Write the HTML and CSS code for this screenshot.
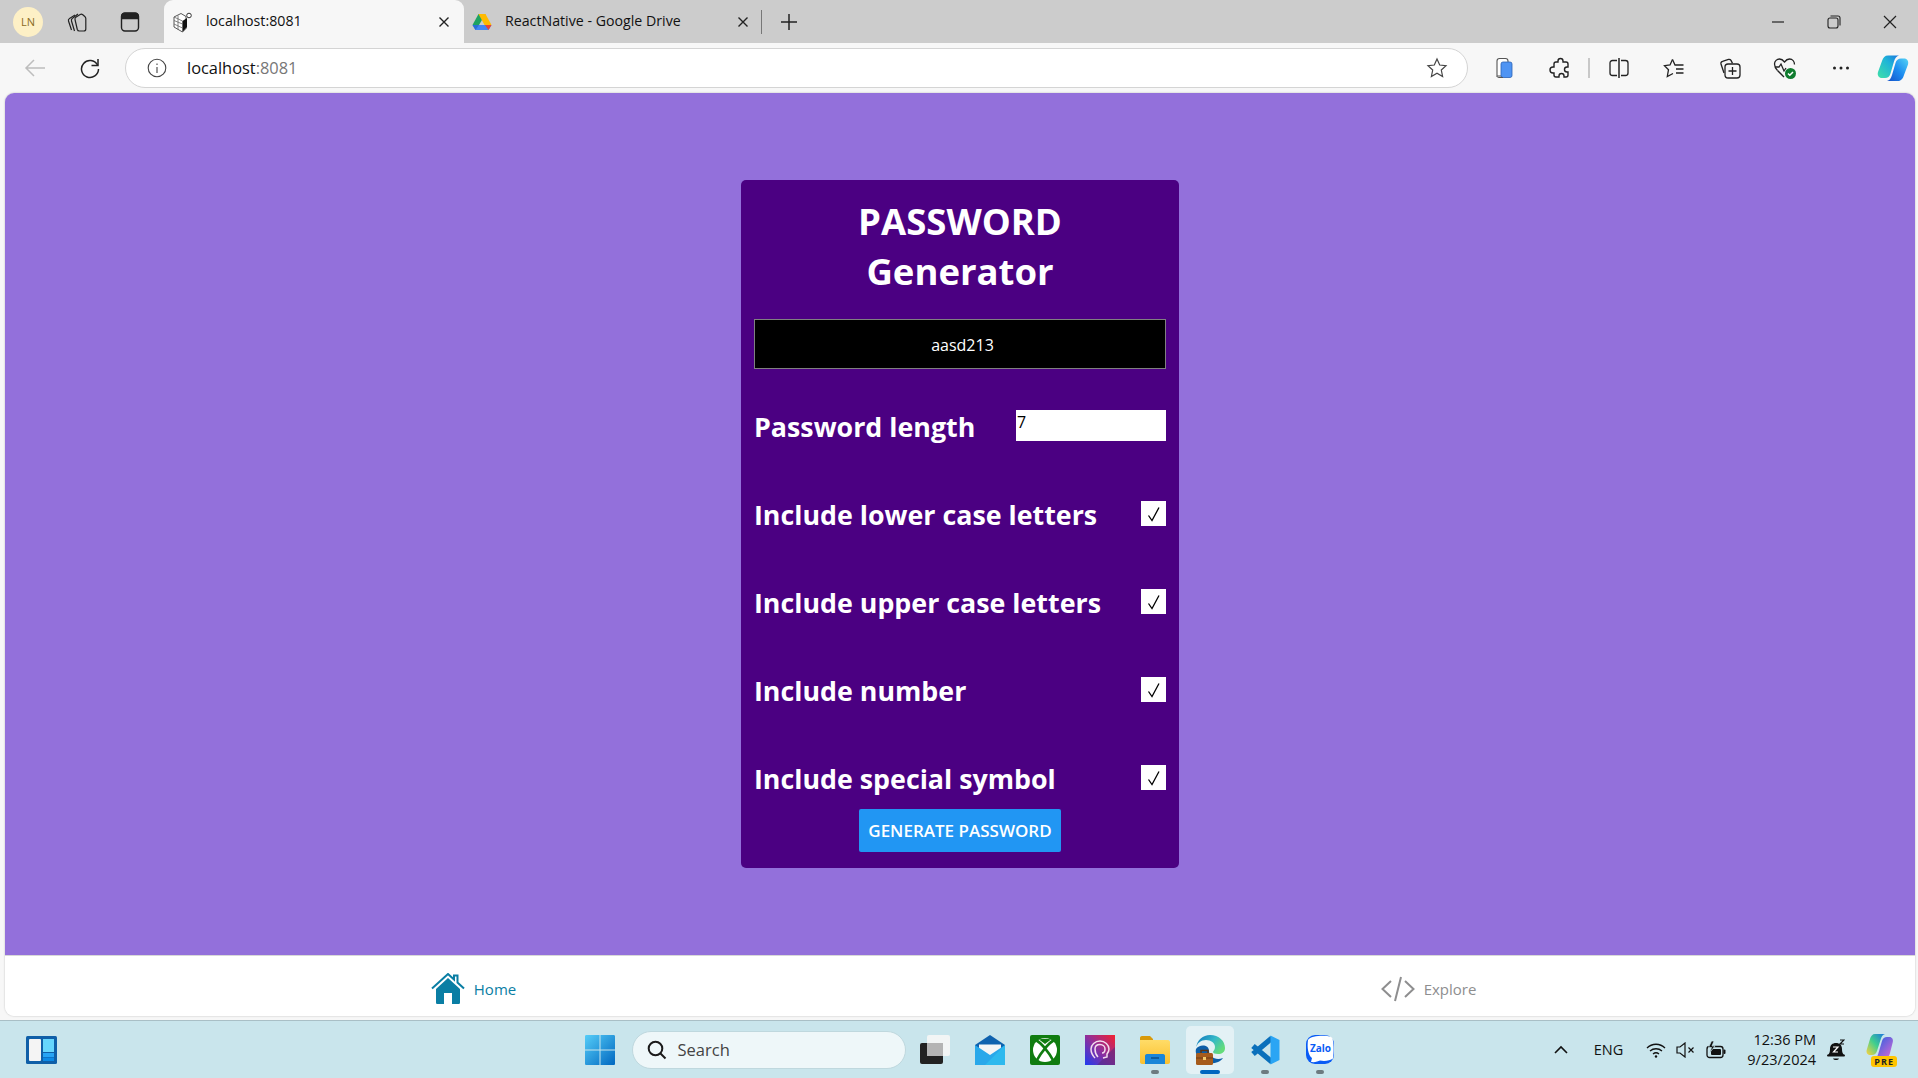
FILE: index.html
```html
<!DOCTYPE html>
<html lang="en">
<head>
    <meta charset="UTF-8">
    <title>localhost:8081</title>
    <link rel="stylesheet" href="styles.css">
</head>
<body>
    <!-- Browser tab strip -->
    <div class="tabstrip">
        <div class="avatar">LN</div>
        <div class="strip-btn">
            <svg width="22" height="22" viewBox="0 0 22 22" fill="none" stroke="#222" stroke-width="1.200"><path d="M5.500 19 2.500 10c-.4-1.200 0-2 1-2.600L9 4"/><path d="M8.500 20 5.500 10c-.4-1.300 0-2.200 1-2.800L12 3"/><path d="M9 8.500c-.3-1.200.3-2 1.200-2.500l4-2.500c1-.5 1.800-.3 2.600.3l2 1.700c.7.600 1 1.200 1 2V18c0 1.300-.8 2-2 2h-4.500c-1 0-1.700-.5-2-1.500z"/></svg>
        </div>
        <div class="strip-btn">
            <svg width="20" height="22" viewBox="0 0 20 22" fill="none" stroke="#222" stroke-width="1.400"><rect x="1.500" y="2" width="17" height="18" rx="3.500"/><path d="M2 5c0-1.500 1-2.500 2.500-2.500h11C17 2.500 18 3.500 18 5v2.500H2z" fill="#222"/></svg>
        </div>
        <div class="tab active">
            <svg class="favicon" width="20" height="22" viewBox="0 0 20 22"><path d="M1 6 8 2.500l5 3v12L9.500 21 1 16z" fill="#fff" stroke="#444" stroke-width=".9"/><path d="M9.500 10 14 7v9l-4.500 5z" fill="#111"/><path d="M1 9.500l8.500 3.500M1 13l8.500 4M5 4.500V18.500M9.500 10v11M1 6l8.500 4" stroke="#666" stroke-width=".8" fill="none"/><circle cx="16" cy="4.500" r="2.300" fill="#fff" stroke="#333"/></svg>
            <span class="tab-title">localhost:8081</span>
            <svg class="tab-close" width="12" height="12" viewBox="0 0 12 12" stroke="#222" stroke-width="1.400"><path d="M1.500 1.500l9 9M10.500 1.500l-9 9"/></svg>
        </div>
        <div class="tab">
            <svg class="favicon" width="20" height="18" viewBox="0 0 20 18"><path d="M6.500 1h7l-6.500 11H.5z" fill="#1ea362"/><path d="M6.500 1h7l6 11h-7z" fill="#ffba00"/><path d="M.5 12h19l-3 5H3.500z" fill="#4285f4"/><path d="M.5 12h6.500l-3.500 5z" fill="#2b6fd6"/><path d="M13 12h6.500l-3 5z" fill="#ea4335"/></svg>
            <span class="tab-title">ReactNative - Google Drive</span>
            <svg class="tab-close" width="12" height="12" viewBox="0 0 12 12" stroke="#222" stroke-width="1.400"><path d="M1.500 1.500l9 9M10.500 1.500l-9 9"/></svg>
        </div>
        <div class="tab-sep"></div>
        <div class="new-tab">
            <svg width="18" height="18" viewBox="0 0 18 18" stroke="#222" stroke-width="1.500"><path d="M9 1v16M1 9h16"/></svg>
        </div>
        <div class="win-controls">
            <div class="win-btn"><svg width="14" height="14" viewBox="0 0 14 14" stroke="#222" stroke-width="1.200"><path d="M1 7h12"/></svg></div>
            <div class="win-btn"><svg width="14" height="14" viewBox="0 0 14 14" fill="none" stroke="#222" stroke-width="1.100"><rect x="1" y="3" width="10" height="10" rx="2"/><path d="M3.500 1H11c1.200 0 2 .8 2 2v7.500"/></svg></div>
            <div class="win-btn"><svg width="14" height="14" viewBox="0 0 14 14" stroke="#222" stroke-width="1.200"><path d="M1 1l12 12M13 1L1 13"/></svg></div>
        </div>
    </div>

    <!-- Address bar and toolbar -->
    <div class="toolbar">
        <div class="nav-btn">
            <svg width="22" height="20" viewBox="0 0 22 20" fill="none" stroke="#bdbdbd" stroke-width="1.500"><path d="M21 10H2M10 2l-8 8 8 8"/></svg>
        </div>
        <div class="nav-btn">
            <svg width="22" height="22" viewBox="0 0 22 22" fill="none" stroke="#222" stroke-width="1.500"><path d="M18.500 8A8.500 8.500 0 1 0 19.500 12"/><path d="M19 2v6.500h-6.500"/></svg>
        </div>
        <div class="addressbar">
            <svg class="info-icon" width="20" height="20" viewBox="0 0 20 20" fill="none" stroke="#444" stroke-width="1.100"><circle cx="10" cy="10" r="8.800"/><path d="M10 9v6M10 5.500v1.500"/></svg>
            <span class="url">localhost<span class="url-port">:8081</span></span>
            <svg class="star-icon" width="22" height="22" viewBox="0 0 22 22" fill="none" stroke="#444" stroke-width="1.200"><path d="M11 2l2.700 6 6.300.7-4.700 4.300 1.300 6.500-5.600-3.300-5.600 3.300L6.700 13 2 8.700 8.300 8z"/></svg>
        </div>
        <div class="tool-group">
            <div class="tool-btn"><svg width="18" height="22" viewBox="0 0 18 22"><path d="M2 19V4c0-1.500.8-2.500 2.500-2.500h6C12 1.500 13 2.500 13 4v15z" fill="#fff" stroke="#555" stroke-width="1.100"/><rect x="6" y="5" width="11" height="15.500" rx="2" fill="#4f94f3" stroke="#2b62b5" stroke-width=".8"/><path d="M2 19c0 1 .7 1.500 2 1.500h4" stroke="#555" fill="none"/></svg></div>
            <div class="tool-btn"><svg width="22" height="22" viewBox="0 0 22 22" fill="none" stroke="#222" stroke-width="1.400"><path d="M9 5V4a2.500 2.500 0 0 1 5 0v1h3a2 2 0 0 1 2 2v3h-1a2.500 2.500 0 0 0 0 5h1v3a2 2 0 0 1-2 2h-2v-1a2.500 2.500 0 0 0-5 0v1H7a2 2 0 0 1-2-2v-2H4a3 3 0 0 1 0-6h1V7a2 2 0 0 1 2-2z"/></svg></div>
            <div class="tool-sep"></div>
            <div class="tool-btn"><svg width="20" height="22" viewBox="0 0 20 22" fill="none" stroke="#222" stroke-width="1.300"><path d="M8 3.500H3.500C2 3.500 1 4.500 1 6v10c0 1.500 1 2.500 2.500 2.500H8M12 3.500h4.500C18 3.500 19 4.500 19 6v10c0 1.500-1 2.500-2.500 2.500H12"/><path d="M10 1v20" stroke-width="1.500"/></svg></div>
            <div class="tool-btn"><svg width="22" height="22" viewBox="0 0 22 22" fill="none" stroke="#222" stroke-width="1.300"><path d="M9.500 2.500 7 8l-5.500.7 4 4-1.200 6.800 5.700-3"/><path d="M9.500 2.500 12 8h8.500M13 12h7.500M13 16h7.500"/></svg></div>
            <div class="tool-btn"><svg width="22" height="22" viewBox="0 0 22 22" fill="none" stroke="#222" stroke-width="1.300"><path d="M5 16 2 7c-.3-1.200.2-2.200 1.500-2.600l6-2c1-.3 2 .2 2.500 1l1.500 3"/><rect x="6" y="7" width="15" height="14" rx="3"/><path d="M13.500 10v8M9.500 14h8"/></svg></div>
            <div class="tool-btn"><svg width="24" height="24" viewBox="0 0 24 24" fill="none" stroke="#222" stroke-width="1.300"><path d="M4.500 14.500C2.500 12.500 1.500 10.500 1.500 8c0-3 2.500-5 5-5 2 0 3.500 1 5 3 1.500-2 3-3 5-3 3 0 5 2.500 5 5.500"/><path d="M2 11h4l2-3 3 7 2-3"/><path d="M4.500 14.500 11 21"/><circle cx="17.500" cy="17.500" r="5.500" fill="#107c2f" stroke="none"/><path d="M15 17.500l1.800 1.800 3.200-3.300" stroke="#fff" stroke-width="1.500"/></svg></div>
            <div class="tool-btn"><svg width="18" height="4" viewBox="0 0 18 4" fill="#222"><circle cx="2.500" cy="2" r="1.500"/><circle cx="9" cy="2" r="1.500"/><circle cx="15.500" cy="2" r="1.500"/></svg></div>
            <div class="tool-btn copilot"><svg width="32" height="28" viewBox="0 0 32 28"><defs><linearGradient id="copA" x1="0" y1="1" x2="1" y2="0"><stop offset="0" stop-color="#3fe0a8"/><stop offset=".6" stop-color="#1fb4d8"/><stop offset="1" stop-color="#1b74e0"/></linearGradient><linearGradient id="copB" x1="0" y1="1" x2="1" y2="0"><stop offset="0" stop-color="#1450c8"/><stop offset=".5" stop-color="#1c8cf0"/><stop offset="1" stop-color="#55d4f5"/></linearGradient></defs><path d="M11 1.500h11c-2.500.5-4 2.500-5 6l-3.500 12c-.8 3-2.800 4.500-5.500 4.500H5c-3.200 0-5-2.700-4-6L5 7c1-3.500 3-5.500 6-5.500z" fill="url(#copA)"/><path d="M21 27H10c2.500-.5 4-2.500 5-6l3.500-12c.8-3 2.800-4.500 5.500-4.500h3c3.200 0 5 2.700 4 6L27 21c-1 3.500-3 6-6 6z" fill="url(#copB)"/></svg></div>
        </div>
    </div>

    <!-- App -->
    <div class="page">
        <div class="content">
            <div class="card">
                <h1 class="title">PASSWORD<br>Generator</h1>
                <div class="output">aasd213</div>
                <div class="row">
                    <label class="row-label">Password length</label>
                    <input class="length-input" type="text" value="7">
                </div>
                <div class="row">
                    <label class="row-label">Include lower case letters</label>
                    <div class="checkbox"><svg width="16" height="16" viewBox="0 0 16 16" fill="none" stroke="#000" stroke-width="1.300"><path d="M2.500 9.500 6 14.500 13 1.500"/></svg></div>
                </div>
                <div class="row">
                    <label class="row-label">Include upper case letters</label>
                    <div class="checkbox"><svg width="16" height="16" viewBox="0 0 16 16" fill="none" stroke="#000" stroke-width="1.300"><path d="M2.500 9.500 6 14.500 13 1.500"/></svg></div>
                </div>
                <div class="row">
                    <label class="row-label">Include number</label>
                    <div class="checkbox"><svg width="16" height="16" viewBox="0 0 16 16" fill="none" stroke="#000" stroke-width="1.300"><path d="M2.500 9.500 6 14.500 13 1.500"/></svg></div>
                </div>
                <div class="row row-last">
                    <label class="row-label">Include special symbol</label>
                    <div class="checkbox"><svg width="16" height="16" viewBox="0 0 16 16" fill="none" stroke="#000" stroke-width="1.300"><path d="M2.500 9.500 6 14.500 13 1.500"/></svg></div>
                </div>
                <button class="generate" type="button">GENERATE PASSWORD</button>
            </div>
        </div>
        <div class="bottom-tabs">
            <div class="bottom-tab home">
                <svg width="34" height="32" viewBox="0 0 34 32"><path d="M1 15.500 17 1l6 5.500V2.500h3.500V9.500L33 15.500" fill="none" stroke="#0a7ea4" stroke-width="2"/><path d="M5 16 17 5l12 11v13.500c0 1-.7 1.500-1.500 1.500H21V20h-8v11H6.500C5.700 31 5 30.500 5 29.500z" fill="#0a7ea4"/></svg>
                <span>Home</span>
            </div>
            <div class="bottom-tab explore">
                <svg width="34" height="26" viewBox="0 0 34 26" fill="none" stroke="#8e8e8f" stroke-width="2"><path d="M10 5 1.500 13 10 21M24 5l8.500 8L24 21M20 1l-6 24"/></svg>
                <span>Explore</span>
            </div>
        </div>
    </div>

    <!-- Windows taskbar -->
    <div class="taskbar">
        <div class="task-left">
            <svg width="31" height="28" viewBox="0 0 31 28"><rect width="31" height="28" rx="1.500" fill="#0f5fa8"/><rect x="3" y="3" width="12" height="22" rx="1" fill="#f4f4f4"/><rect x="17" y="3" width="11" height="13" fill="#66d6fd"/><rect x="17" y="17" width="11" height="4" fill="#27a4f5"/><rect x="17" y="21.500" width="11" height="3.500" fill="#0c8ae6"/></svg>
        </div>
        <div class="task-center">
            <svg class="start" width="30" height="30" viewBox="0 0 30 30"><defs><linearGradient id="winG" x1="0" y1="0" x2="1" y2="1"><stop offset="0" stop-color="#55cdf8"/><stop offset="1" stop-color="#0067c0"/></linearGradient></defs><path d="M0 1.500C0 .5.500 0 1.500 0h13v14.500H0zM15.500 0h13c1 0 1.500.5 1.500 1.500v13H15.500zM0 15.500h14.500V30h-13C.5 30 0 29.500 0 28.500zM15.500 15.500H30v13c0 1-.5 1.500-1.500 1.500h-13z" fill="url(#winG)"/></svg>
            <div class="search">
                <svg width="20" height="20" viewBox="0 0 20 20" fill="none" stroke="#1a1a1a" stroke-width="2"><circle cx="8.500" cy="8.500" r="6.800"/><path d="M13.500 13.500l5 5"/></svg>
                <span>Search</span>
            </div>
            <div class="task-app first">
                <svg width="30" height="30" viewBox="0 0 30 30"><rect x="0" y="8" width="23" height="21" rx="2" fill="#222"/><rect x="7" y="0" width="23" height="21" rx="2" fill="#f2f5f5"/><rect x="7" y="8" width="16" height="13" fill="#b4b4b4"/></svg>
            </div>
            <div class="task-app">
                <svg width="30" height="30" viewBox="0 0 30 30"><path d="M15 0 30 10v3H0v-3z" fill="#0f62ae"/><path d="M4 9.500h22V17l-11 7-11-7z" fill="#f5f5f5"/><path d="M0 10l15 10 15-10v20H0z" fill="#29a8ea"/><path d="M30 10v20H10z" fill="#2fc0f0" opacity=".7"/></svg>
            </div>
            <div class="task-app">
                <svg width="30" height="30" viewBox="0 0 30 30"><rect width="30" height="30" rx="2" fill="#107c10"/><circle cx="15" cy="15" r="12" fill="#fff"/><path d="M6.500 5.500C11 8 19 17 23.500 26M23.500 5.500C19 8 11 17 6.500 26" fill="none" stroke="#107c10" stroke-width="2.600"/><path d="M9 4.500c2.500-1 9.500-1 12 0L15 9z" fill="#107c10"/></svg>
            </div>
            <div class="task-app">
                <svg width="30" height="30" viewBox="0 0 30 30"><defs><linearGradient id="appG" x1="0" y1="1" x2="1" y2="0"><stop offset="0" stop-color="#1f3cf0"/><stop offset=".5" stop-color="#8f2f9c"/><stop offset="1" stop-color="#f4212f"/></linearGradient></defs><rect width="30" height="30" fill="url(#appG)"/><path d="M30 30H12L30 12z" fill="#5a2a80" opacity=".6"/><path d="M10 23c-2-2-4-5-4-9 0-4 4-8 9-8s9 4 9 8c0 2-.5 3-2 5v3l-4 1M13 22c-2-2-3-5-3-8s2-4.500 5-4.500 5 2 5 4.500-1.500 4-3 4" fill="none" stroke="#f3dcef" stroke-width="1.500"/></svg>
            </div>
            <div class="task-app running">
                <svg width="30" height="30" viewBox="0 0 30 30"><defs><linearGradient id="foldG" x1="0" y1="0" x2="0" y2="1"><stop offset="0" stop-color="#ffdc68"/><stop offset="1" stop-color="#fbc02d"/></linearGradient></defs><path d="M0 3c0-1 .5-2 2-2h8l3 3v3H0z" fill="#d99a0a"/><path d="M0 5h28c1 0 2 1 2 2v20c0 1-1 2-2 2H2c-1 0-2-1-2-2z" fill="url(#foldG)"/><path d="M5 21c0-1 .5-2 2-2h16c1.500 0 2 1 2 2v8H5z" fill="#1a86d8"/><path d="M11 23h8" stroke="#0b4f8a" stroke-width="1.500"/></svg>
            </div>
            <div class="task-app current">
                <svg width="30" height="32" viewBox="0 0 30 32"><defs><linearGradient id="edgeG" x1="0" y1="0" x2="1" y2=".6"><stop offset="0" stop-color="#0c6fbb"/><stop offset=".55" stop-color="#34b8c8"/><stop offset="1" stop-color="#63dc7a"/></linearGradient></defs><path d="M1 14C2 6 8 1 15 1c9 0 15 6 15 13 0 4-3 6-7 6-3 0-5-1-5-2 0-1 2-2 2-5 0-4-4-7-9-7-5 0-9 3-10 8z" fill="url(#edgeG)"/><path d="M1 15c3-5 13-5 13 2 0 5 6 10 14 7-4 6-16 8-23 1C2 22 0 19 1 15z" fill="#0c5ea8"/><rect x="1" y="19" width="17" height="12" rx="1.500" fill="#a65b1c"/><path d="M1 24h17" stroke="#6f3c12"/><path d="M6 19v-2.500h7V19" fill="none" stroke="#5f3310" stroke-width="1.500"/><rect x="8" y="23" width="3" height="3" fill="#f5c96a"/></svg>
            </div>
            <div class="task-app running">
                <svg width="30" height="30" viewBox="0 0 30 30"><path d="M22 3 3 19M22 27 3 11" stroke="#0a70bb" stroke-width="5.500" fill="none"/><path d="M20.500 .5 29.500 5v20l-9 4.500z" fill="#2aa5f4"/></svg>
            </div>
            <div class="task-app running">
                <svg width="30" height="32" viewBox="0 0 30 32"><rect x="1" y="1" width="28" height="29" rx="9" fill="#0a5cf5"/><path d="M3 6C2 13 3 21 7 24l-1 4c4 .5 7-.5 9-1.500 5 1 10 0 13-2 1-6 1-17-1-21-3-2.500-21-2.500-24 2.500z" fill="#fff"/><text x="15.500" y="18" class="zalo-word">Zalo</text></svg>
            </div>
        </div>
        <div class="task-right">
            <svg class="tray-chevron" width="14" height="9" viewBox="0 0 14 9" fill="none" stroke="#111" stroke-width="1.600"><path d="M1 8l6-6 6 6"/></svg>
            <span class="tray-lang">ENG</span>
            <svg class="tray-wifi" width="20" height="16" viewBox="0 0 20 16" fill="none" stroke="#111" stroke-width="1.300"><path d="M1 6c5-5 13-5 18 0M4 9c3.500-3 8.500-3 12 0M7 12c1.800-1.500 4.200-1.500 6 0"/><circle cx="10" cy="14.500" r="1.200" fill="#111" stroke="none"/></svg>
            <svg class="tray-sound" width="20" height="16" viewBox="0 0 20 16" fill="none" stroke="#111" stroke-width="1.200"><path d="M1 5h3l5-4v14l-5-4H1z"/><path d="M12.500 5.500l5 5M17.500 5.500l-5 5"/></svg>
            <svg class="tray-battery" width="20" height="18" viewBox="0 0 20 18" fill="none" stroke="#111" stroke-width="1.300"><rect x="1" y="5.500" width="16" height="11" rx="2.500"/><rect x="5" y="8" width="10" height="6" rx="1" fill="#111" stroke="none"/><rect x="17.500" y="8.500" width="2" height="4.500" rx="1" fill="#111" stroke="none"/><path d="M5.500 0 2.500 6.500h3L3.500 12l5.500-7H6l2-5z" fill="#111" stroke="#c9e5ec" stroke-width=".7"/></svg>
            <div class="clock">
                <div>12:36 PM</div>
                <div>9/23/2024</div>
            </div>
            <svg class="tray-bell" width="18" height="22" viewBox="0 0 18 22"><path d="M1 16c1.500-1.500 2-3 2-6 0-4 2.500-6 6-6s6 2 6 6c0 3 .5 4.500 2 6z" fill="#111"/><rect x="0" y="15.500" width="18" height="2" rx="1" fill="#111"/><path d="M6 19.500h6c-1 2-5 2-6 0z" fill="#111"/><path d="M6 8h5l-4.500 5H11" fill="none" stroke="#fff" stroke-width="1.200"/><path d="M13 1h4l-4 4h4" fill="none" stroke="#111" stroke-width="1.200"/></svg>
            <div class="copilot-pre">
                <svg width="28" height="28" viewBox="0 0 28 28"><defs><linearGradient id="preA" x1="0" y1="1" x2="1" y2="0"><stop offset="0" stop-color="#ffd23c"/><stop offset=".5" stop-color="#3fcf8e"/><stop offset="1" stop-color="#1b74e0"/></linearGradient><linearGradient id="preB" x1="0" y1="0" x2="1" y2="1"><stop offset="0" stop-color="#1b5fe0"/><stop offset="1" stop-color="#e06ad6"/></linearGradient></defs><path d="M9 1h10c-2.500.5-3.500 2.500-4.500 6l-3.500 11c-.8 2.500-2.500 4-5 4H4c-2.500 0-4-2.500-3.300-5L4 6c.8-3 2.500-5 5-5z" fill="url(#preA)"/><path d="M18 26H8c2.500-.5 3.500-2.500 4.500-6L16 8c.8-2.500 2.500-4 5-4h2.500c2.500 0 4 2.500 3.300 5L24 20c-.8 3.500-3 6-6 6z" fill="url(#preB)"/></svg>
                <span class="pre-badge">PRE</span>
            </div>
        </div>
    </div>
</body>
</html>
```

FILE: styles.css
```css
* {
    box-sizing: border-box;
}

body {
    margin: 0;
    width: 1918px;
    height: 1078px;
    overflow: hidden;
    display: flex;
    flex-direction: column;
    background-color: #f7f7f7;
    font-family: "Open Sans", "Noto Sans", sans-serif;
    color: #111;
}

/* Tab strip */
.tabstrip {
    height: 43px;
    flex: none;
    display: flex;
    align-items: center;
    background-color: #cccccc;
    padding-left: 13px;
}

.avatar {
    width: 30px;
    height: 30px;
    border-radius: 50%;
    background-color: #fdf0c6;
    color: #8a6a1c;
    font-size: 11px;
    display: flex;
    align-items: center;
    justify-content: center;
}

.strip-btn {
    width: 53px;
    display: flex;
    justify-content: center;
}

.avatar + .strip-btn {
    margin-left: 7px;
}

.tab {
    width: 297px;
    height: 43px;
    display: flex;
    align-items: center;
    padding: 0 12px 0 8px;
    font-size: 14.200px;
}

.tab.active {
    width: 300px;
    margin-left: 8px;
    background-color: #f7f7f7;
    border-radius: 9px 9px 0 0;
    padding: 0 14px 0 9px;
}

.favicon {
    margin-right: 13px;
    flex: none;
}

.tab-title {
    flex: 1;
    white-space: nowrap;
    padding-bottom: 2px;
}

.tab-close {
    flex: none;
}

.tab-sep {
    width: 1px;
    height: 24px;
    background-color: #777;
}

.new-tab {
    margin-left: 18px;
    display: flex;
}

.win-controls {
    margin-left: auto;
    display: flex;
}

.win-btn {
    width: 56px;
    display: flex;
    justify-content: center;
}

/* Toolbar */
.toolbar {
    height: 50px;
    flex: none;
    display: flex;
    align-items: center;
    padding-left: 7px;
}

.nav-btn {
    width: 55px;
    display: flex;
    justify-content: center;
}

.addressbar {
    width: 1343px;
    height: 40px;
    margin-left: 8px;
    display: flex;
    align-items: center;
    background-color: #fff;
    border: 1.500px solid #d4d4d4;
    border-radius: 20px;
    padding: 0 19px 0 21px;
}

.info-icon {
    flex: none;
}

.url {
    margin-left: 20px;
    padding-bottom: 2px;
    font-size: 16.400px;
    color: #111;
}

.url-port {
    color: #777;
}

.star-icon {
    margin-left: auto;
}

.tool-group {
    display: flex;
    align-items: center;
    margin-left: 12px;
    gap: 7.500px;
}

.tool-btn {
    width: 48px;
    display: flex;
    justify-content: center;
}

.tool-btn.copilot {
    margin-left: -3px;
}

.tool-sep {
    width: 2px;
    height: 20px;
    background-color: #c8c8c8;
    margin: 0 -3px;
}

/* App area */
.page {
    flex: none;
    height: 923px;
    margin: 0 3px 4px 5px;
    display: flex;
    flex-direction: column;
    border-radius: 9px;
    overflow: hidden;
    box-shadow: 0 0 2px rgba(0, 0, 0, 0.25);
}

.content {
    flex: 1;
    display: flex;
    align-items: center;
    justify-content: center;
    background-color: #9370db;
}

.card {
    width: 438px;
    background-color: #4b0082;
    border-radius: 5px;
    padding: 16px 13px 16px;
    display: flex;
    flex-direction: column;
    color: #fff;
}

.title {
    margin: 0 0 23px;
    font-size: 36.500px;
    line-height: 50px;
    font-weight: 700;
    text-align: center;
}

.output {
    height: 50px;
    margin-bottom: 35px;
    display: flex;
    align-items: center;
    justify-content: center;
    padding: 1px 0 0 5px;
    background-color: #000;
    border: 1px solid #808080;
    font-size: 16px;
}

.row {
    height: 43px;
    margin-bottom: 45px;
    display: flex;
    align-items: center;
    justify-content: space-between;
}

.row-last {
    margin-bottom: 10px;
}

.row-label {
    font-size: 26.800px;
    font-weight: 700;
    white-space: nowrap;
    padding-top: 2px;
}

.length-input {
    width: 150px;
    height: 31px;
    border: none;
    border-radius: 0;
    padding: 0 0 7px 1px;
    background-color: #fff;
    color: #000;
    font-family: inherit;
    font-size: 16px;
    outline: none;
}

.checkbox {
    width: 25px;
    height: 25px;
    background-color: #fff;
    display: flex;
    align-items: center;
    justify-content: center;
}

.generate {
    align-self: center;
    width: 202px;
    height: 43px;
    padding: 0;
    border: none;
    border-radius: 2px;
    background-color: #2196f3;
    color: #fff;
    font-family: inherit;
    font-size: 17px;
    font-weight: 600;
}

/* Bottom navigation */
.bottom-tabs {
    height: 61px;
    flex: none;
    display: flex;
    padding-top: 5px;
    background-color: #fff;
    border-top: 1px solid #d8d8d8;
}

.bottom-tab {
    flex: 1;
    display: flex;
    align-items: center;
    justify-content: center;
    gap: 9px;
    padding-right: 18px;
    font-size: 15px;
}

.bottom-tab.home {
    color: #0a7ea4;
}

.bottom-tab.explore {
    color: #8e8e8f;
}

/* Taskbar */
.taskbar {
    flex: none;
    height: 58px;
    display: grid;
    grid-template-columns: 1fr auto 1fr;
    align-items: center;
    background-color: #c9e5ec;
    border-top: 1px solid #a9bfc6;
}

.task-left {
    display: flex;
    padding-left: 26px;
}

.task-center {
    display: flex;
    align-items: center;
    height: 100%;
    padding-left: 14px;
}

.start {
    flex: none;
}

.search {
    width: 274px;
    height: 38px;
    margin-left: 17px;
    display: flex;
    align-items: center;
    gap: 11px;
    padding-left: 14px;
    background-color: #eef7f9;
    border: 1px solid #bfd8de;
    border-radius: 19px;
    font-size: 16.500px;
    color: #444;
}

.task-app {
    width: 55px;
    height: 48px;
    position: relative;
    display: flex;
    align-items: center;
    justify-content: center;
}

.task-app.first {
    margin-left: 2px;
}

.task-app.current {
    width: 48px;
    margin: 0 3.500px;
    background-color: #e3f1f5;
    border-radius: 5px;
}

.task-app.running::after,
.task-app.current::after {
    content: "";
    position: absolute;
    left: 50%;
    bottom: 0;
    width: 8px;
    height: 4px;
    margin-left: -4px;
    border-radius: 2px;
    background-color: #6c7a80;
}

.task-app.current::after {
    width: 20px;
    margin-left: -10px;
    background-color: #0067c0;
}

.zalo-word {
    font-family: "Open Sans", sans-serif;
    font-size: 10px;
    font-weight: 700;
    fill: #0a5cf5;
    text-anchor: middle;
}

.task-right {
    display: flex;
    align-items: center;
    justify-content: flex-end;
    padding-right: 22px;
}

.tray-lang {
    margin-left: 26px;
    font-size: 14.500px;
    color: #111;
}

.tray-wifi {
    margin-left: 23px;
}

.tray-sound {
    margin-left: 10px;
}

.tray-battery {
    margin-left: 10px;
}

.clock {
    margin-left: 21px;
    text-align: right;
    font-size: 14.500px;
    line-height: 20px;
    color: #111;
}

.tray-bell {
    margin-left: 11px;
}

.copilot-pre {
    width: 30px;
    height: 34px;
    margin-left: 21px;
    position: relative;
}

.pre-badge {
    position: absolute;
    right: -1px;
    bottom: 0;
    padding: 0 3px;
    background-color: #ffc400;
    border-radius: 3px;
    font-size: 9px;
    line-height: 11px;
    font-weight: 700;
    letter-spacing: 1px;
    color: #222;
}
```
